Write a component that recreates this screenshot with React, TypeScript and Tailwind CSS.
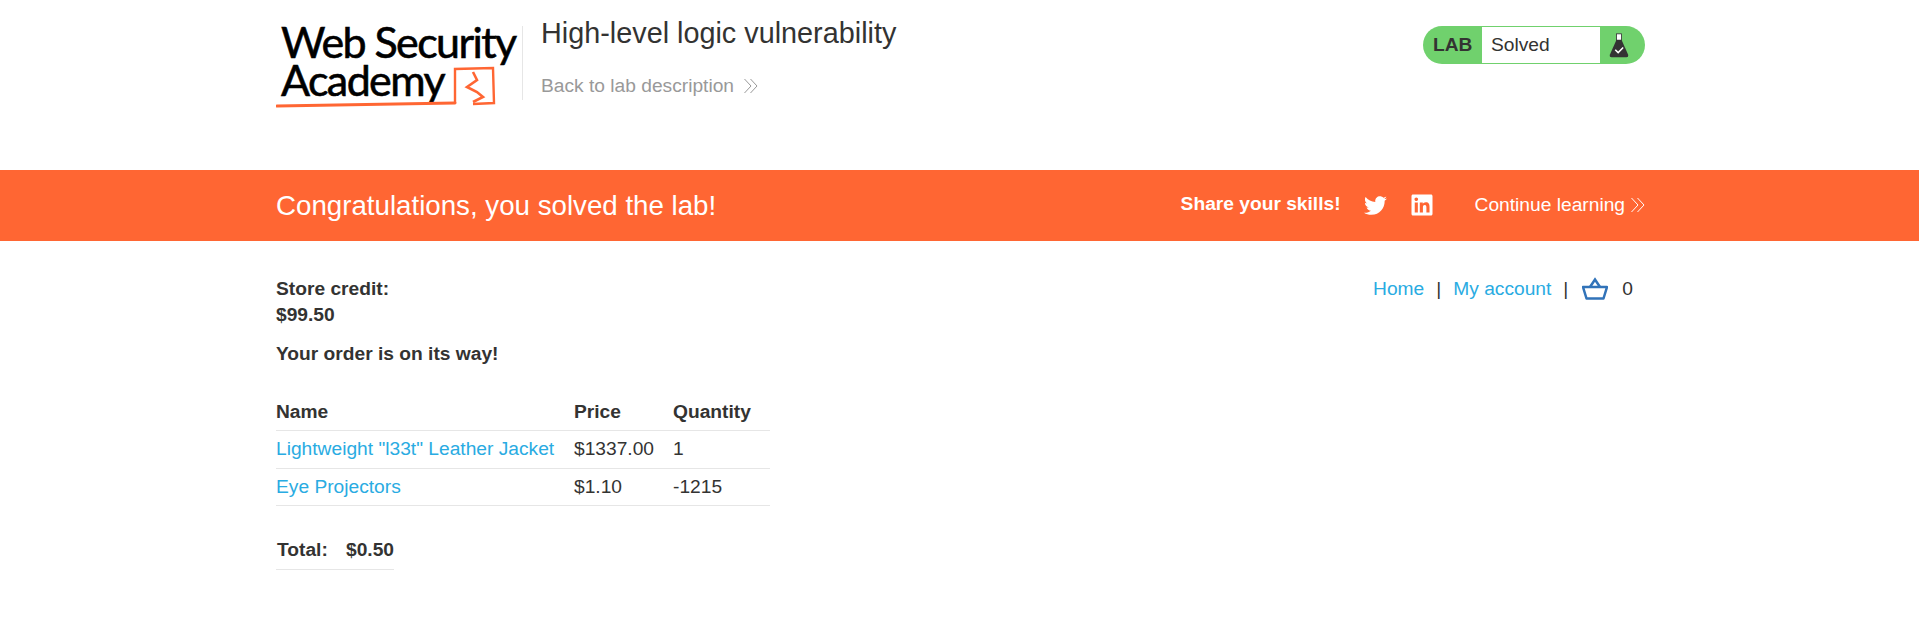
import { FaTwitter, FaLinkedin } from 'react-icons/fa';

function Chevrons({ className }: { className: string }) {
    return (
        <svg viewBox="0 0 14 16" className={className} fill="none" stroke="currentColor" strokeWidth="1">
            <path d="M0.5 1l6.5 7-6.5 7" />
            <path d="M6.5 1l6.5 7-6.5 7" />
        </svg>
    );
}

function Logo() {
    return (
        <div className="relative w-[240px] h-[92px] text-black font-['Lato',sans-serif] tracking-[-1.6px] text-[43px] leading-[38px] pl-[5px] pt-[1px] [-webkit-text-stroke:0.6px_#000]">
            <div className="whitespace-nowrap">Web Security</div>
            <div className="whitespace-nowrap">Academy</div>
            <svg viewBox="0 0 240 92" className="absolute left-0 top-0 w-[240px] h-[92px]" fill="none" stroke="#ff6633">
                <path d="M1 84 C60 83 120 82 179 81" strokeWidth="3" strokeLinecap="round" />
                <path d="M179 81 L179 47 L217 46 L218 81 L197 82" strokeWidth="2.4" />
                <path d="M197 50 L201 58 L191 65 L201 70 L207 75 L197 80" strokeWidth="2.6" />
            </svg>
        </div>
    );
}

function Flask() {
    return (
        <svg viewBox="0 0 24 30" className="w-[20px] h-[25px]">
            <rect x="9" y="1" width="6" height="8" fill="#fff" stroke="#333" strokeWidth="1" />
            <path d="M9 8 L15 8 L23 26 Q23.5 29 21 29 L3 29 Q0.5 29 1 26 Z" fill="#333" />
            <path d="M7.5 20 L11 23.5 L17 17.5" fill="none" stroke="#fff" strokeWidth="1.8" />
        </svg>
    );
}

function Basket() {
    return (
        <svg viewBox="0 0 26 24" className="w-[26px] h-[24px]" fill="none" stroke="#3173b9" strokeWidth="2.5">
            <path d="M1 10 L25 10 L21.5 21.5 L4.5 21.5 Z" strokeLinejoin="round" />
            <path d="M8 10 L13 2.5 L18 10" />
        </svg>
    );
}

export default function App() {
    return (
        <div className="min-h-[621px] bg-white text-[16px] text-[#333332] font-['Liberation_Sans',Arial,sans-serif]">
            <header className="h-[170px] w-[1369px] ml-[276px] flex justify-between items-start">
                <div className="flex items-start pt-[22px]">
                    <Logo />
                    <div className="ml-[6px] mt-[4px] pl-[18px] h-[74px] border-l border-[#e6e6e6]">
                        <h2 className="text-[28.8px] leading-[34px] -mt-[10px]">High-level logic vulnerability</h2>
                        <a className="mt-[24px] flex items-center text-[#999] text-[19.2px] leading-[24px]">
                            Back to lab description
                            <Chevrons className="w-[14px] h-[16px] ml-[10px]" />
                        </a>
                    </div>
                </div>
                <div className="mt-[26px] flex items-stretch h-[38px] w-[222px] rounded-[19px] bg-[#70d16d] overflow-hidden">
                    <div className="w-[59px] pl-[10px] flex items-center font-bold text-[19.2px]">LAB</div>
                    <div className="w-[118px] my-px bg-white pl-[9px] flex items-center text-[19.2px]">Solved</div>
                    <div className="flex-1 flex items-center pl-[9px]"><Flask /></div>
                </div>
            </header>

            <section className="h-[71px] bg-[#ff6633] text-white">
                <div className="w-[1369px] ml-[276px] h-full flex items-center justify-between">
                    <h4 className="text-[27.7px]">Congratulations, you solved the lab!</h4>
                    <div className="flex items-center">
                        <span className="font-bold text-[19.2px] -mt-[3px]">Share your skills!</span>
                        <FaTwitter className="ml-[23px] w-[23px] h-[23px]" />
                        <FaLinkedin className="ml-[23px] w-[24px] h-[24px]" />
                        <span className="ml-[41px] text-[19.2px]">Continue learning</span>
                        <Chevrons className="ml-[6px] w-[14px] h-[16px]" />
                    </div>
                </div>
            </section>

            <main className="w-[1369px] ml-[276px] relative pt-[35px] text-[19.2px] leading-[26px]">
                <div className="absolute right-[12px] top-[35px] flex items-center leading-[26px]">
                    <a className="text-[#29abe2]">Home</a>
                    <span className="mx-[12px]">|</span>
                    <a className="text-[#29abe2]">My account</a>
                    <span className="ml-[12px] mr-[14px]">|</span>
                    <Basket />
                    <span className="ml-[14px]">0</span>
                </div>
                <p className="font-bold">Store credit:<br />$99.50</p>
                <p className="font-bold mt-[13px]">Your order is on its way!</p>
                <table className="mt-[27px] w-[494px] border-collapse text-left">
                    <thead>
                        <tr className="border-b border-[#e6e6e6] h-[36px]">
                            <th className="font-bold w-[298px]">Name</th>
                            <th className="font-bold w-[99px]">Price</th>
                            <th className="font-bold">Quantity</th>
                        </tr>
                    </thead>
                    <tbody>
                        <tr className="border-b border-[#e6e6e6] h-[38px]">
                            <td><a className="text-[#29abe2]">Lightweight "l33t" Leather Jacket</a></td>
                            <td>$1337.00</td>
                            <td>1</td>
                        </tr>
                        <tr className="border-b border-[#e6e6e6] h-[37px]">
                            <td><a className="text-[#29abe2]">Eye Projectors</a></td>
                            <td>$1.10</td>
                            <td>-1215</td>
                        </tr>
                    </tbody>
                </table>
                <div className="mt-[26px] w-[118px] h-[38px] border-b border-[#e6e6e6] flex justify-between items-center font-bold pl-px">
                    <span>Total:</span>
                    <span>$0.50</span>
                </div>
            </main>
        </div>
    );
}
